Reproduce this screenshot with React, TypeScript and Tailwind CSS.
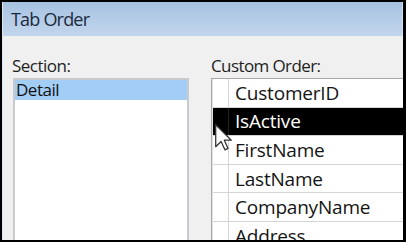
import React from "react";

const rows = ["CustomerID", "IsActive", "FirstName", "LastName", "CompanyName", "Address"];

export default function App() {
  return (
    <div className="w-[406px] h-[242px] bg-black pt-[2px] pl-[2px] pr-[3px] pb-[2px] overflow-hidden" style={{ fontFamily: '"Open Sans", "Noto Sans", sans-serif' }}>
      <div className="relative h-full flex flex-col bg-[#f0f0f0] overflow-hidden border-l border-[#dce6f1]">
        <div className="h-[34px] shrink-0 flex items-center pl-[8px] bg-gradient-to-b from-[#a6c2e2] to-[#c2d6ec] border-r border-[#d3e0ee]">
          <span className="text-[18px] leading-[20px] tracking-[-0.8px] font-medium text-[#1c2a40]">Tab Order</span>
        </div>
        <div className="flex-1 flex pl-[10px] pt-[19.5px] gap-[22px]">
          <div className="w-[176px] shrink-0 flex flex-col">
            <div className="text-[17px] leading-[20px] tracking-[-0.5px] font-medium text-[#1e1e1e] -ml-[1px]">Section:</div>
            <div className="mt-[2.5px] h-[200px] bg-white border-2 border-[#c9c9ce]">
              <div className="h-[20px] bg-[#a3cdf5] pl-[1px] text-[17px] leading-[20px] tracking-[-0.5px] font-medium text-[#111]">Detail</div>
            </div>
          </div>
          <div className="flex-1 flex flex-col">
            <div className="text-[17px] leading-[20px] tracking-[-0.6px] font-medium text-[#1e1e1e]">Custom Order:</div>
            <div className="mt-[2.5px] bg-white border-l border-t border-[#a9a9a9]">
              <div className="border-l border-[#e2e2e2]">
                {rows.map((r, i) => {
                  const sel = i === 1;
                  return (
                    <div key={r} className={`h-[28.6px] flex border-b border-[#d5d5d5] ${sel ? "bg-black" : "bg-white"}`}>
                      <div className={`w-[16px] shrink-0 border-r ${sel ? "border-[#222]" : "border-[#d5d5d5]"}`} />
                      <div className={`flex-1 flex items-center pl-[6px] text-[19px] leading-[26px] tracking-[-0.2px] font-medium whitespace-nowrap ${sel ? "text-white" : "text-[#141414]"}`}>{r}</div>
                    </div>
                  );
                })}
              </div>
            </div>
          </div>
        </div>
        <svg className="absolute left-[212px] top-[122px]" width="17" height="27" viewBox="0 0 12 19">
          <path d="M0.5 0.5 L0.5 16 L4.3 12.3 L7 18.2 L9.2 17.2 L6.6 11.4 L11.5 11.4 Z" fill="white" stroke="#333" strokeWidth="0.9" strokeLinejoin="round" />
        </svg>
      </div>
    </div>
  );
}
